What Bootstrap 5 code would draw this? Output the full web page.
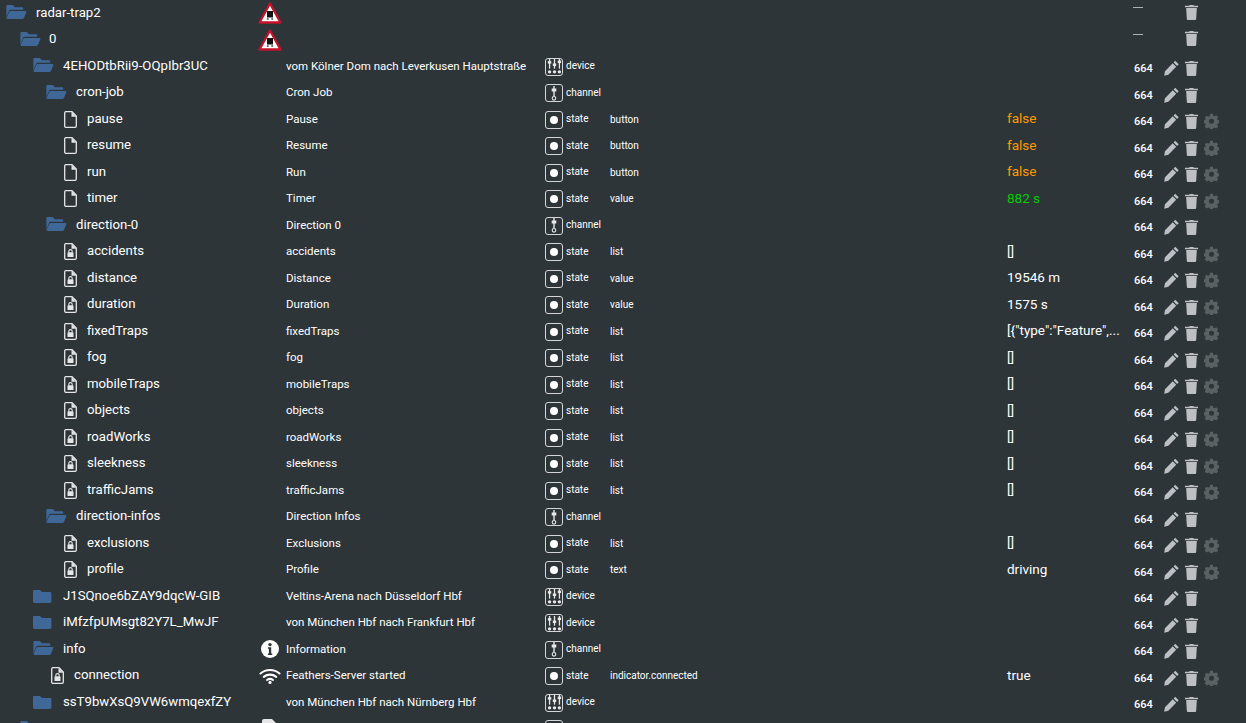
<!DOCTYPE html>
<html lang="de"><head><meta charset="utf-8"><title>radar-trap2</title>
<link href="https://cdn.jsdelivr.net/npm/bootstrap@5.3.0/dist/css/bootstrap.min.css" rel="stylesheet">
<style>
html,body{height:723px;overflow:hidden;background:#2e3539;}
body{font-family:Roboto,"Open Sans",sans-serif;color:#fff;font-size:12px;}
.tree-row{height:26.5px;display:grid;grid-template-columns:258px 24px 261px 67px 397px 125px 1fr;align-items:center;white-space:nowrap;}
.id-cell{display:flex;align-items:center;font-size:13.2px;min-width:0;}
.id-txt{margin-bottom:1px}
.ic-open{width:21px;height:16px;flex:none;color:#3f6797;margin-top:-2px}
.ic-closed{width:21px;height:16px;flex:none;color:#3f6797;margin-top:-1px}
.ic-file{width:13px;height:17px;flex:none;color:#e4e6e7;}
.lvl0{padding-left:6px}.lvl0 .id-txt{margin-left:9px}
.lvl1{padding-left:20px}.lvl1 .id-txt{margin-left:8px}
.lvl2{padding-left:33px}.lvl2 .id-txt{margin-left:9px}
.lvl3{padding-left:46px}.lvl3 .id-txt{margin-left:9px}
.lvl4{padding-left:64px}.lvl4 .id-txt{margin-left:10px}
.lvl4b{padding-left:51px}.lvl4b .id-txt{margin-left:10px}
.ic-col{display:flex;justify-content:center;}
.ic-col svg{display:block}
.name-cell{font-size:11.5px;padding-left:4px;}
.type-cell{display:flex;align-items:center;font-size:10px;padding-top:1px}
.ty-txt{margin-bottom:2px}
.ty-box{width:18px;height:18px;flex:none;border:1px solid #d4d6d7;border-radius:3px;margin-right:3px;margin-left:2px;display:flex;align-items:center;justify-content:center}
.role-cell{font-size:10px;}
.val-cell{font-size:13.5px;padding-bottom:2px}
.val-orange{color:#f90}.val-green{color:#0c0}
.act-cell{display:flex;align-items:center;padding-top:4px}
.act-top{padding-top:0;margin-top:-3px}
.acl-txt{width:31px;font-size:11px;font-weight:500;padding-left:2px;padding-top:2px}
.acl-dash{display:block;width:10px;height:1px;background:#aeb2b4;margin-bottom:8px;margin-left:-1px}
.act-top .acl-txt{padding-top:0}
.act-ic{width:15px;height:16px;flex:none;margin-right:5px;color:#bcc0c2}
.act-first{margin-left:1px}
.act-gear{color:#5b6062}
</style></head><body>
<div id="tree"></div>
<script>
const folder=o=>o
 ?`<svg class="ic-open" viewBox=".8 1 19.4 15"><path fill="currentColor" d="M1 3.200C1 2.500 1.500 2 2.200 2H7l2 2h6.500c.8 0 1.300.5 1.300 1.300V6.500H5.200c-.8 0-1.400.4-1.700 1.100L1 13.600z"/><path fill="currentColor" d="M5 7.500h14c.6 0 1 .5.800 1.100L17.600 14c-.2.600-.7 1-1.300 1H2c-.6 0-1-.5-.8-1.100L3.700 8.400C3.900 7.900 4.400 7.500 5 7.500z"/></svg>`
 :`<svg class="ic-closed" viewBox="0 0 21 16"><path fill="currentColor" d="M0 3.300C0 2.500.5 2 1.300 2H7l2 2h8c.8 0 1.400.6 1.400 1.400v8.200c0 .8-.6 1.400-1.400 1.400H1.400C.6 15 0 14.400 0 13.600z"/></svg>`;
const file=l=>`<svg class="ic-file" viewBox="0 0 13 17"><path fill="none" stroke="currentColor" stroke-width="1.300" d="M1.700.7H8l4.300 4.300v10c0 .7-.5 1.300-1.200 1.300H1.700C1.100 16.300.7 15.700.7 15V2C.7 1.200 1.100.7 1.700.7z"/><path fill="currentColor" d="M7.500 1v4.700h4.800z"/>${l?'<path fill="none" stroke="currentColor" stroke-width="1.100" d="M4.800 9.500V8.300a1.700 1.700 0 0 1 3.400 0V9.500"/><rect fill="currentColor" x="3.500" y="9.300" width="6" height="4.700" rx=".6"/>':''}</svg>`;
const warn=`<svg width="24" height="24" viewBox="0 0 24 24"><path fill="#fff" stroke="#c4122a" stroke-width="2.300" stroke-linejoin="round" d="M12 2.500 22.500 21.500H1.500z"/><rect fill="#111" x="9" y="10" width="6" height="6.500"/><circle cx="9.800" cy="18" r="1.100" fill="#666"/><circle cx="14.200" cy="18" r="1.100" fill="#666"/></svg>`;
const infoI=`<svg width="20" height="20" viewBox="0 0 20 20"><circle cx="10" cy="10" r="9" fill="#fff"/><circle cx="10" cy="5.600" r="1.700" fill="#2e3539"/><path fill="#2e3539" d="M7.900 8.300h3.300v6.200h1V16H7.900v-1.500h1V9.800h-1z"/></svg>`;
const wifi=`<svg width="22" height="16" viewBox="0 0 22 16"><path fill="none" stroke="#fff" stroke-width="2.100" stroke-linecap="round" d="M1.500 5.500C6.800.8 15.200.8 20.500 5.500M4.800 8.900c3.600-3 8.800-3 12.400 0M8 12c1.800-1.300 4.200-1.300 6 0"/><circle cx="11" cy="14.400" r="1.600" fill="#fff"/></svg>`;
const docI=`<svg width="16" height="20" viewBox="0 0 16 20"><path fill="#e4e6e7" d="M2 0h8l6 6v14H0V2C0 .9.900 0 2 0z"/></svg>`;
const tyI={
device:'<svg width="15" height="15" viewBox="0 0 14 14" fill="#e8e8e8"><rect x="1.800" y="0" width="1.200" height="9"/><rect x="6.400" y="0" width="1.200" height="9"/><rect x="11" y="0" width="1.200" height="9"/><rect x=".8" y="2" width="3.200" height="2.300"/><rect x="5.400" y="4.200" width="3.200" height="2.300"/><rect x="10" y="1.500" width="3.200" height="2.300"/><circle cx="2.400" cy="12" r="1.600"/><circle cx="7" cy="12" r="1.600"/><circle cx="11.600" cy="12" r="1.600"/></svg>',
channel:'<svg width="8" height="15" viewBox="0 0 8 15" fill="#e8e8e8"><rect x="3.300" y="0" width="1.400" height="10"/><rect x="1.700" y="2.500" width="4.600" height="3"/><circle cx="4" cy="12.300" r="1.800" fill="none" stroke="#e8e8e8" stroke-width="1.100"/></svg>',
state:'<svg width="10" height="10" viewBox="0 0 10 10"><circle cx="5" cy="5" r="4" fill="#fff"/></svg>'};
const pen=`<svg class="act-ic act-first" viewBox="0 0 16 17"><path fill="currentColor" d="M12 .8 15.700 4.500 13.900 6.300 10.200 2.600zM9.300 3.500 13 7.200 4.600 15.600.2 16.800 1 12z"/></svg>`;
const trash=`<svg class="act-ic" viewBox="0 0 16 17"><path fill="currentColor" d="M1 1.800h4.500L6 1h4l.5.800H15v1.500H1zM2.300 4.300h11.400l-.7 11.300c0 .8-.6 1.400-1.400 1.400H4.400c-.8 0-1.400-.6-1.400-1.400z"/></svg>`;
const gear=`<svg class="act-ic act-gear" viewBox="0 0 16 17"><path fill="currentColor" fill-rule="evenodd" d="M6.500.8h3l.4 2.100 1.300.6 1.800-1.200 2.100 2.100-1.200 1.800.6 1.300 2.100.4v3l-2.100.4-.6 1.300 1.200 1.800-2.100 2.100-1.800-1.200-1.300.6-.4 1.900h-3l-.4-1.900-1.300-.6-1.800 1.200L.7 14.400l1.200-1.800-.6-1.300-1.800-.4v-3l1.800-.4.6-1.300L.7 4.900l2.100-2.100 1.800 1.200 1.300-.6zM8 6a2.700 2.700 0 1 0 0 5.400A2.700 2.700 0 0 0 8 6z"/></svg>`;
const S='state';
const rows=[
['radar-trap2','o','lvl0',warn,'','','','','','t-'],
['0','o','lvl1',warn,'','','','','','t-'],
['4EHODtbRii9-OQpIbr3UC','o','lvl2','','vom Kölner Dom nach Leverkusen Hauptstraße','device','','','','pt'],
['cron-job','o','lvl3','','Cron Job','channel','','','','pt'],
['pause','f','lvl4','','Pause',S,'button','false','val-orange','ptg'],
['resume','f','lvl4','','Resume',S,'button','false','val-orange','ptg'],
['run','f','lvl4','','Run',S,'button','false','val-orange','ptg'],
['timer','f','lvl4','','Timer',S,'value','882 s','val-green','ptg'],
['direction-0','o','lvl3','','Direction 0','channel','','','','pt'],
['accidents','l','lvl4','','accidents',S,'list','[]','','ptg'],
['distance','l','lvl4','','Distance',S,'value','19546 m','','ptg'],
['duration','l','lvl4','','Duration',S,'value','1575 s','','ptg'],
['fixedTraps','l','lvl4','','fixedTraps',S,'list','[{"type":"Feature",...','','ptg'],
['fog','l','lvl4','','fog',S,'list','[]','','ptg'],
['mobileTraps','l','lvl4','','mobileTraps',S,'list','[]','','ptg'],
['objects','l','lvl4','','objects',S,'list','[]','','ptg'],
['roadWorks','l','lvl4','','roadWorks',S,'list','[]','','ptg'],
['sleekness','l','lvl4','','sleekness',S,'list','[]','','ptg'],
['trafficJams','l','lvl4','','trafficJams',S,'list','[]','','ptg'],
['direction-infos','o','lvl3','','Direction Infos','channel','','','','pt'],
['exclusions','l','lvl4','','Exclusions',S,'list','[]','','ptg'],
['profile','l','lvl4','','Profile',S,'text','driving','','ptg'],
['J1SQnoe6bZAY9dqcW-GIB','c','lvl2','','Veltins-Arena nach Düsseldorf Hbf','device','','','','pt'],
['iMfzfpUMsgt82Y7L_MwJF','c','lvl2','','von München Hbf nach Frankfurt Hbf','device','','','','pt'],
['info','o','lvl2',infoI,'Information','channel','','','','pt'],
['connection','l','lvl4b',wifi,'Feathers-Server started',S,'indicator.connected','true','','ptg'],
['ssT9bwXsQ9VW6wmqexfZY','c','lvl2','','von München Hbf nach Nürnberg Hbf','device','','','','pt'],
['','o','lvl1',docI,'','blank','','','','']
];
document.getElementById('tree').innerHTML=rows.map(r=>{
 const [id,k,lv,ic,name,ty,role,val,vc,act]=r;
 const icon=k==='o'?folder(1):k==='c'?folder(0):file(k==='l');
 const tb=ty?`<span class="ty-box">${tyI[ty]||''}</span><span class="ty-txt">${ty==='blank'?'':ty}</span>`:'';
 const acts=act==='t-'?`<span class="acl-txt"><span class="acl-dash"></span></span><span class="act-ic act-first"></span>${trash}`:
  act?`<span class="acl-txt">664</span>${pen}${trash}${act==='ptg'?gear:''}`:'';
 return `<div class="tree-row"><div class="id-cell ${lv}">${icon}<span class="id-txt">${id}</span></div><div class="ic-col">${ic}</div><div class="name-cell">${name}</div><div class="type-cell">${tb}</div><div class="role-cell">${role}</div><div class="val-cell ${vc}">${val}</div><div class="act-cell ${act==='t-'?'act-top':''}">${acts}</div></div>`;
}).join('');
</script>
<script src="https://cdn.jsdelivr.net/npm/bootstrap@5.3.0/dist/js/bootstrap.bundle.min.js"></script>
</body></html>
